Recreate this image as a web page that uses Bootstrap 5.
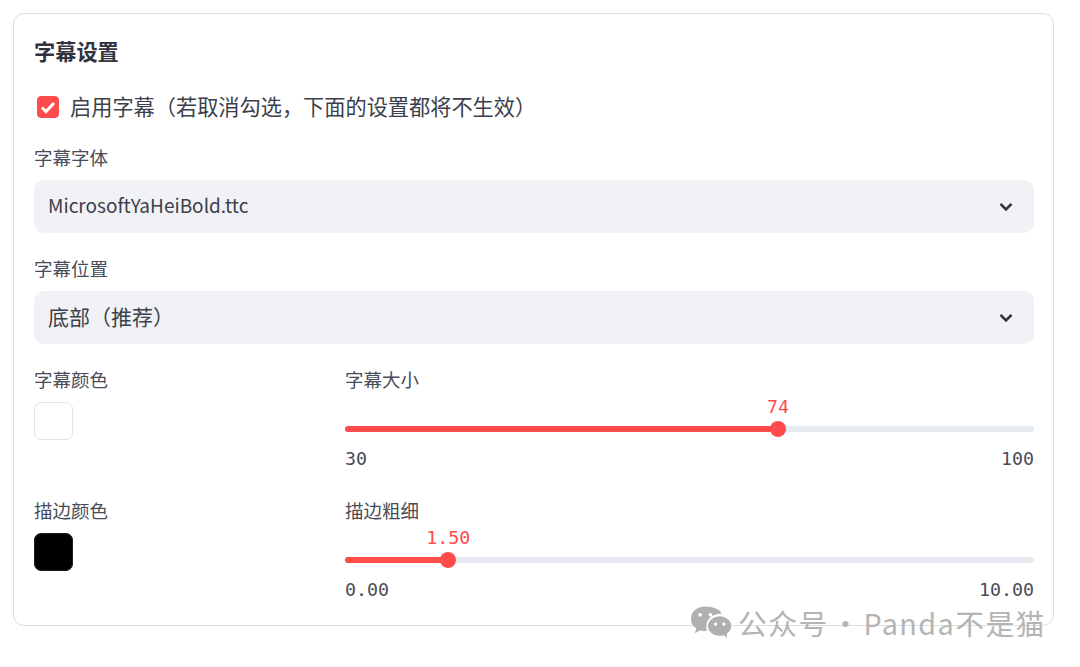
<!DOCTYPE html>
<html lang="zh-CN">
<head>
  <meta charset="UTF-8">
  <title>字幕设置</title>
  <meta name="viewport" content="width=device-width, initial-scale=1">
  <link href="https://cdn.jsdelivr.net/npm/bootstrap@5.3.3/dist/css/bootstrap.min.css" rel="stylesheet">
  <style>
    body {
      background: #fff;
      color: #31333f;
      font-family: "Noto Sans CJK SC", "Liberation Sans", sans-serif;
      font-size: 18.5px;
      overflow: hidden;
    }
    .page-wrap { position: relative; height: 667px; padding: 13px 26px 0 13px; }
    .settings-box {
      height: 613px;
      padding: 21px 19px 0 20px;
      border: 1px solid #dcdde0;
      border-radius: 11px;
    }
    .box-title { font-size: 21.2px; font-weight: 700; line-height: 32px; margin: 0 0 26px; }
    .check-row { height: 28px; margin-bottom: 24px; font-size: 21.2px; line-height: 28px; padding-left: 3px; gap: 11px; color: #3d3f4a; }
    .check-row label { padding-bottom: 2px; }
    .check-row .form-check-input {
      width: 22px; height: 22px; margin: 0; flex: none;
      background-color: #ff4b4b; border-color: #ff4b4b; border-radius: 4px;
      background-size: 18px 18px;
      background-position: center;
      background-image: url("data:image/svg+xml,%3csvg xmlns='http://www.w3.org/2000/svg' viewBox='0 0 18 18'%3e%3cpath fill='none' stroke='%23fff' stroke-width='3' d='M3 9.500l4 4 8-8.500'/%3e%3c/svg%3e");
      opacity: 1;
    }
    .field-label { display: block; font-size: 18.5px; line-height: 24px; margin: 0 0 11px; color: #4a4c57; }
    .pick-box {
      height: 53px;
      padding: 0 14px 2px;
      margin-bottom: 23px;
      border: 0;
      border-radius: 10px;
      background-color: #f0f2f6;
      color: #3d3f4a;
      font-size: 21px;
      background-image: url("data:image/svg+xml,%3csvg xmlns='http://www.w3.org/2000/svg' viewBox='0 0 14 10'%3e%3cpath fill='none' stroke='%2331333f' stroke-width='2.600' d='M1.500 1.800L7 7.300l5.500-5.500'/%3e%3c/svg%3e");
      background-position: right 21px center;
      background-size: 14px 10px;
    }
    .pick-latin { font-size: 19px; }
    .pick-box:focus { box-shadow: none; background-color: #f0f2f6; }
    .swatch-col { width: 311px; flex: none; }
    .swatch { width: 39px; height: 38px; border-radius: 7px; border: 1px solid #e3e4e7; }
    .swatch-black { background: #000; border-color: #222; }
    .slider-col { flex: 1; }
    .slider-row { height: 131px; }
    .slider-rail { position: relative; height: 6px; margin-top: 35px; border-radius: 3px; background-color: #e6eaf1; overflow: visible; }
    .slider-rail .progress-bar { background-color: #ff4b4b; border-radius: 3px; overflow: visible; }
    .slider-thumb { position: absolute; top: -5px; width: 16px; height: 16px; margin-left: -8px; border-radius: 50%; background: #ff4b4b; }
    .slider-num { position: absolute; top: -31px; transform: translateX(-50%); color: #ff4b4b; }
    .mono-txt { font-family: "DejaVu Sans Mono", "Liberation Mono", monospace; font-size: 18.3px; line-height: 24px; }
    .slider-ends { margin-top: 15px; color: #4a4c57; }
    .water-mark {
      position: absolute;
      left: 691px;
      top: 601px;
      gap: 6px;
      color: #b4b4b4;
      font-size: 28.8px;
      line-height: 44px;
      letter-spacing: 1.4px;
      word-spacing: -5.500px;
      white-space: nowrap;
    }
  </style>
</head>
<body>
<div class="page-wrap">
  <div class="settings-box bg-white">
    <h5 class="box-title">字幕设置</h5>
    <div class="check-row d-flex align-items-center">
      <input class="form-check-input" type="checkbox" id="subOn" checked>
      <label for="subOn">启用字幕（若取消勾选，下面的设置都将不生效）</label>
    </div>

    <label class="field-label">字幕字体</label>
    <select class="form-select pick-box pick-latin"><option>MicrosoftYaHeiBold.ttc</option></select>

    <label class="field-label">字幕位置</label>
    <select class="form-select pick-box"><option>底部（推荐）</option></select>

    <div class="d-flex slider-row">
      <div class="swatch-col">
        <label class="field-label">字幕颜色</label>
        <div class="swatch bg-white"></div>
      </div>
      <div class="slider-col">
        <label class="field-label">字幕大小</label>
        <div class="progress slider-rail">
          <div class="progress-bar" style="width: 62.86%"></div>
          <span class="slider-thumb" style="left: 62.86%"></span>
          <span class="slider-num mono-txt" style="left: 62.86%">74</span>
        </div>
        <div class="d-flex justify-content-between mono-txt slider-ends"><span>30</span><span>100</span></div>
      </div>
    </div>

    <div class="d-flex">
      <div class="swatch-col">
        <label class="field-label">描边颜色</label>
        <div class="swatch swatch-black"></div>
      </div>
      <div class="slider-col">
        <label class="field-label">描边粗细</label>
        <div class="progress slider-rail">
          <div class="progress-bar" style="width: 15%"></div>
          <span class="slider-thumb" style="left: 15%"></span>
          <span class="slider-num mono-txt" style="left: 15%">1.50</span>
        </div>
        <div class="d-flex justify-content-between mono-txt slider-ends"><span>0.00</span><span>10.00</span></div>
      </div>
    </div>
  </div>

  <div class="water-mark d-flex align-items-center">
    <svg width="41" height="34" viewBox="1 2 40 32">
      <path fill="#b0b0b0" d="M15 2C7 2 1 7 1 14c0 4 2 7 5 9l-1 5 5-3c2 .6 3.500 .8 5 .8h1.500C16 24 16 22.500 16 21c0-7 6-12 14-12h1C29.500 5 23 2 15 2z"/>
      <path fill="#b0b0b0" stroke="#fff" stroke-width="1" d="M29 11c-6.600 0-12 4.500-12 10s5.400 10 12 10c1.400 0 2.800-.2 4-.6l4 3.600-.6-5.400c2.800-1.800 4.400-4.600 4.400-7.600 0-5.500-5.200-10-11.800-10z"/>
      <circle cx="10" cy="10" r="1.800" fill="#fff"/><circle cx="20" cy="10" r="1.800" fill="#fff"/>
      <circle cx="25" cy="19" r="1.600" fill="#fff"/><circle cx="33" cy="19" r="1.600" fill="#fff"/>
    </svg>
    <span>公众号 · Panda不是猫</span>
  </div>
</div>
<script src="https://cdn.jsdelivr.net/npm/bootstrap@5.3.3/dist/js/bootstrap.bundle.min.js"></script>
</body>
</html>
